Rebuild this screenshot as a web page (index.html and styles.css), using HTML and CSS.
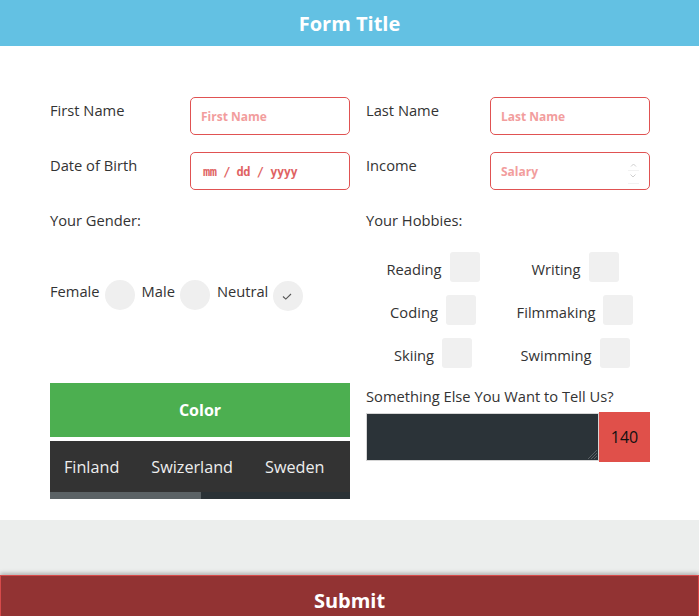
FILE: index.html
```html
<!DOCTYPE html>
<html lang="en">
<head>
<meta charset="utf-8">
<title>Form Title</title>
<link rel="stylesheet" href="styles.css">
</head>
<body>
<header class="header"><h1 class="title">Form Title</h1></header>
<form class="form">
  <div class="fields">
    <div class="field field-left">
      <label class="label">First Name</label>
      <div class="input"><span class="ph">First Name</span></div>
    </div>
    <div class="field field-right">
      <label class="label">Last Name</label>
      <div class="input"><span class="ph">Last Name</span></div>
    </div>
    <div class="field field-left">
      <label class="label">Date of Birth</label>
      <div class="input"><span class="date">mm / dd / yyyy</span></div>
    </div>
    <div class="field field-right">
      <label class="label">Income</label>
      <div class="input input-number"><span class="ph">Salary</span>
        <span class="spinner">
          <svg width="14" height="26" viewBox="0 0 14 26"><path d="M2 11.5h11M2 24.5h11" stroke="#f2f2f2" stroke-width="1" fill="none"/><path d="M5 7.5l2.5-2.5 2.5 2.5" stroke="#cfcfcf" stroke-width="1" fill="none"/><path d="M4.5 15.5l2.5 2.5 2.5-2.5" stroke="#cfcfcf" stroke-width="1" fill="none"/></svg>
        </span>
      </div>
    </div>
  </div>
  <div class="lower">
    <div class="col">
      <div class="section-title">Your Gender:</div>
      <div class="genders">
        <div class="gender"><span class="gtext">Female</span><span class="radio"></span></div>
        <div class="gender"><span class="gtext">Male</span><span class="radio"></span></div>
        <div class="gender"><span class="gtext">Neutral</span><span class="radio radio-checked"><svg width="10" height="7" viewBox="0 0 10 7"><path d="M1 3.5l2.8 2.6L9 1" stroke="#555" stroke-width="1.1" fill="none"/></svg></span></div>
      </div>
      <button type="button" class="color-btn">Color</button>
      <div class="tabs">
        <div class="tab-list"><span class="tab">Finland</span><span class="tab">Swizerland</span><span class="tab">Sweden</span></div>
        <div class="tab-indicator"><span class="tab-active"></span></div>
      </div>
    </div>
    <div class="col">
      <div class="section-title">Your Hobbies:</div>
      <div class="hobbies">
        <div class="hobby"><span class="htext">Reading</span><span class="box"></span></div>
        <div class="hobby"><span class="htext">Writing</span><span class="box"></span></div>
        <div class="hobby"><span class="htext">Coding</span><span class="box"></span></div>
        <div class="hobby"><span class="htext">Filmmaking</span><span class="box"></span></div>
        <div class="hobby"><span class="htext">Skiing</span><span class="box"></span></div>
        <div class="hobby"><span class="htext">Swimming</span><span class="box"></span></div>
      </div>
      <div class="section-title ta-title">Something Else You Want to Tell Us?</div>
      <div class="ta-row">
        <div class="textarea">
          <svg class="grip" width="12" height="12" viewBox="0 0 12 12"><path d="M11 2L2 11M11 5L5 11M11 8L8 11" stroke="#5a6064" stroke-width="1" fill="none"/></svg>
        </div>
        <div class="counter">140</div>
      </div>
    </div>
  </div>
</form>
<div class="footer-band"></div>
<button type="button" class="submit">Submit</button>
</body>
</html>
```

FILE: styles.css
```css
* { box-sizing: border-box; }
html, body { margin: 0; padding: 0; background: #fff; }
body {
  font-family: "Open Sans", "Noto Sans", sans-serif;
  color: #333;
  font-size: 14.7px;
  line-height: 20px;
  overflow: hidden;
}
.header {
  height: 46px;
  background: #63c1e3;
  display: flex;
  align-items: center;
  justify-content: center;
  padding-top: 2px;
}
.title {
  margin: 0;
  color: #fff;
  font-size: 20px;
  font-weight: 700;
  line-height: 26px;
}
.form {
  padding: 51px 49px 21px 50px;
}
.fields {
  display: grid;
  grid-template-columns: 300px 284px;
  column-gap: 16px;
  row-gap: 17px;
}
.field {
  display: flex;
  align-items: flex-start;
}
.label {
  padding-top: 3px;
  color: #333;
}
.field-left .label { width: 140px; }
.field-right .label { width: 124px; }
.input {
  width: 160px;
  height: 38px;
  border: 1px solid #e05252;
  border-radius: 5px;
  display: flex;
  align-items: center;
  padding-left: 10px;
  position: relative;
}
.ph {
  color: #f29d9d;
  font-size: 12px;
  font-weight: 700;
  padding-top: 1px;
}
.date {
  font-family: "DejaVu Sans Mono", monospace;
  font-size: 12px;
  font-weight: 700;
  letter-spacing: -0.5px;
  color: #e06363;
  padding-left: 2px;
  padding-top: 1px;
}
.spinner {
  position: absolute;
  right: 9px;
  top: 6px;
  display: flex;
}
.lower {
  display: grid;
  grid-template-columns: 300px 284px;
  column-gap: 16px;
  margin-top: 20px;
}
.col { display: flex; flex-direction: column; }
.section-title { color: #333; }
.genders {
  margin-top: 50px;
  display: flex;
  align-items: flex-start;
  gap: 7px;
}
.gender { display: flex; align-items: flex-start; }
.gtext { margin-top: 1px; margin-right: 5px; }
.radio {
  width: 30px;
  height: 30px;
  border-radius: 50%;
  background: #efefef;
  display: flex;
  align-items: center;
  justify-content: center;
}
.radio-checked { margin-top: 1px; }
.radio-checked svg { margin-left: -2px; margin-top: 1px; }
.color-btn {
  margin-top: 72px;
  width: 300px;
  height: 54px;
  border: none;
  background: #4caf50;
  color: #fff;
  font-family: "Open Sans", "Noto Sans", sans-serif;
  font-size: 16px;
  font-weight: 700;
  padding: 0;
}
.tabs {
  margin-top: 4px;
  background: #333;
}
.tab-list {
  height: 51px;
  display: flex;
  align-items: center;
  padding-left: 14px;
  gap: 32px;
}
.tab {
  color: #eee;
  font-size: 16.2px;
}
.tab-indicator {
  height: 7px;
  background: #2b3236;
  display: flex;
}
.tab-active {
  width: 151px;
  background: #5b6265;
}
.hobbies {
  margin-top: 22px;
  margin-left: -4px;
  width: 284px;
  display: grid;
  grid-template-columns: 142px 142px;
  row-gap: 13px;
}
.hobby {
  display: flex;
  justify-content: center;
  align-items: flex-start;
}
.htext { margin-top: 7px; margin-right: 8px; }
.box {
  width: 30px;
  height: 30px;
  border-radius: 3px;
  background: #f0f0f0;
}
.ta-title { margin-top: 18px; }
.ta-row {
  margin-top: 6px;
  display: flex;
  align-items: center;
  height: 50px;
}
.textarea {
  width: 233px;
  height: 48px;
  background: #2b3338;
  border: 1px solid #d6d6d6;
  position: relative;
}
.grip { position: absolute; right: 0; bottom: 0; }
.counter {
  width: 51px;
  height: 50px;
  background: #e0504a;
  color: #111;
  font-size: 16px;
  display: flex;
  align-items: center;
  justify-content: center;
}
.footer-band {
  height: 55px;
  background: #eceeed;
}
.submit {
  display: block;
  width: 100%;
  height: 50px;
  margin-top: 0;
  background: #923333;
  border: 1px solid #d64a4a;
  box-shadow: 0 -2px 4px rgba(0, 0, 0, 0.25);
  color: #fff;
  font-family: "Open Sans", "Noto Sans", sans-serif;
  font-size: 20px;
  font-weight: 700;
  padding: 0;
  position: relative;
}
```
